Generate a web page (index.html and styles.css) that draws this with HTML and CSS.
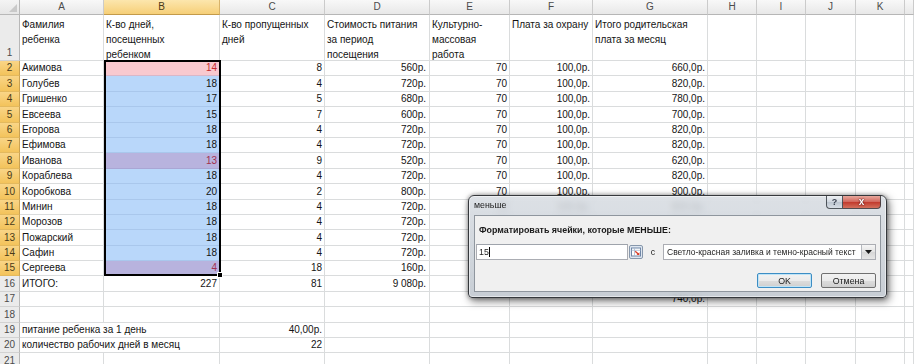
FILE: index.html
```html
<!DOCTYPE html>
<html lang="ru">
<head>
<meta charset="utf-8">
<title>меньше</title>
<link rel="stylesheet" href="styles.css">
</head>
<body>
<div class="app">
  <div class="sheet">
    <div class="corner"><span class="tri"></span></div>
    <div class="ch">A</div><div class="ch on">B</div><div class="ch">C</div><div class="ch">D</div><div class="ch">E</div><div class="ch">F</div><div class="ch">G</div><div class="ch">H</div><div class="ch">I</div><div class="ch">J</div><div class="ch">K</div><div class="ch"></div>

    <div class="c rh top">1</div><div class="c t">Фамилия<br>ребенка</div><div class="c t">К-во дней,<br>посещенных<br>ребенком</div><div class="c t">К-во пропущенных<br>дней</div><div class="c t">Стоимость питания<br>за период<br>посещения</div><div class="c t">Культурно-<br>массовая<br>работа</div><div class="c t">Плата за охрану</div><div class="c t">Итого родительская<br>плата за месяц</div><div class="c"></div><div class="c"></div><div class="c"></div><div class="c"></div><div class="c"></div>

    <div class="c rh on">2</div><div class="c">Акимова</div><div class="c r p">14</div><div class="c r">8</div><div class="c r d">560р.</div><div class="c r">70</div><div class="c r">100,0р.</div><div class="c r">660,0р.</div><div class="c"></div><div class="c"></div><div class="c"></div><div class="c"></div><div class="c"></div>

    <div class="c rh on">3</div><div class="c">Голубев</div><div class="c r b">18</div><div class="c r">4</div><div class="c r d">720р.</div><div class="c r">70</div><div class="c r">100,0р.</div><div class="c r">820,0р.</div><div class="c"></div><div class="c"></div><div class="c"></div><div class="c"></div><div class="c"></div>

    <div class="c rh on">4</div><div class="c">Гришенко</div><div class="c r b">17</div><div class="c r">5</div><div class="c r d">680р.</div><div class="c r">70</div><div class="c r">100,0р.</div><div class="c r">780,0р.</div><div class="c"></div><div class="c"></div><div class="c"></div><div class="c"></div><div class="c"></div>

    <div class="c rh on">5</div><div class="c">Евсеева</div><div class="c r b">15</div><div class="c r">7</div><div class="c r d">600р.</div><div class="c r">70</div><div class="c r">100,0р.</div><div class="c r">700,0р.</div><div class="c"></div><div class="c"></div><div class="c"></div><div class="c"></div><div class="c"></div>

    <div class="c rh on">6</div><div class="c">Егорова</div><div class="c r b">18</div><div class="c r">4</div><div class="c r d">720р.</div><div class="c r">70</div><div class="c r">100,0р.</div><div class="c r">820,0р.</div><div class="c"></div><div class="c"></div><div class="c"></div><div class="c"></div><div class="c"></div>

    <div class="c rh on">7</div><div class="c">Ефимова</div><div class="c r b">18</div><div class="c r">4</div><div class="c r d">720р.</div><div class="c r">70</div><div class="c r">100,0р.</div><div class="c r">820,0р.</div><div class="c"></div><div class="c"></div><div class="c"></div><div class="c"></div><div class="c"></div>

    <div class="c rh on">8</div><div class="c">Иванова</div><div class="c r v">13</div><div class="c r">9</div><div class="c r d">520р.</div><div class="c r">70</div><div class="c r">100,0р.</div><div class="c r">620,0р.</div><div class="c"></div><div class="c"></div><div class="c"></div><div class="c"></div><div class="c"></div>

    <div class="c rh on">9</div><div class="c">Кораблева</div><div class="c r b">18</div><div class="c r">4</div><div class="c r d">720р.</div><div class="c r">70</div><div class="c r">100,0р.</div><div class="c r">820,0р.</div><div class="c"></div><div class="c"></div><div class="c"></div><div class="c"></div><div class="c"></div>

    <div class="c rh on">10</div><div class="c">Коробкова</div><div class="c r b">20</div><div class="c r">2</div><div class="c r d">800р.</div><div class="c r">70</div><div class="c r">100,0р.</div><div class="c r">900,0р.</div><div class="c"></div><div class="c"></div><div class="c"></div><div class="c"></div><div class="c"></div>

    <div class="c rh on">11</div><div class="c">Минин</div><div class="c r b">18</div><div class="c r">4</div><div class="c r d">720р.</div><div class="c r">70</div><div class="c r">100,0р.</div><div class="c r">820,0р.</div><div class="c"></div><div class="c"></div><div class="c"></div><div class="c"></div><div class="c"></div>

    <div class="c rh on">12</div><div class="c">Морозов</div><div class="c r b">18</div><div class="c r">4</div><div class="c r d">720р.</div><div class="c r">70</div><div class="c r">100,0р.</div><div class="c r">820,0р.</div><div class="c"></div><div class="c"></div><div class="c"></div><div class="c"></div><div class="c"></div>

    <div class="c rh on">13</div><div class="c">Пожарский</div><div class="c r b">18</div><div class="c r">4</div><div class="c r d">720р.</div><div class="c r">70</div><div class="c r">100,0р.</div><div class="c r">820,0р.</div><div class="c"></div><div class="c"></div><div class="c"></div><div class="c"></div><div class="c"></div>

    <div class="c rh on">14</div><div class="c">Сафин</div><div class="c r b">18</div><div class="c r">4</div><div class="c r d">720р.</div><div class="c r">70</div><div class="c r">100,0р.</div><div class="c r">820,0р.</div><div class="c"></div><div class="c"></div><div class="c"></div><div class="c"></div><div class="c"></div>

    <div class="c rh on">15</div><div class="c">Сергеева</div><div class="c r v">4</div><div class="c r">18</div><div class="c r d">160р.</div><div class="c r">70</div><div class="c r">100,0р.</div><div class="c r">260,0р.</div><div class="c"></div><div class="c"></div><div class="c"></div><div class="c"></div><div class="c"></div>

    <div class="c rh">16</div><div class="c">ИТОГО:</div><div class="c r">227</div><div class="c r">81</div><div class="c r d">9 080р.</div><div class="c r">980</div><div class="c r">1 400,0р.</div><div class="c r">10 480,0р.</div><div class="c"></div><div class="c"></div><div class="c"></div><div class="c"></div><div class="c"></div>

    <div class="c rh">17</div><div class="c"></div><div class="c"></div><div class="c"></div><div class="c"></div><div class="c"></div><div class="c"></div><div class="c r">740,0р.</div><div class="c"></div><div class="c"></div><div class="c"></div><div class="c"></div><div class="c"></div>

    <div class="c rh">18</div><div class="c"></div><div class="c"></div><div class="c"></div><div class="c"></div><div class="c"></div><div class="c"></div><div class="c"></div><div class="c"></div><div class="c"></div><div class="c"></div><div class="c"></div><div class="c"></div>

    <div class="c rh">19</div><div class="c span2">питание ребенка за 1 день</div><div class="c r">40,00р.</div><div class="c"></div><div class="c"></div><div class="c"></div><div class="c"></div><div class="c"></div><div class="c"></div><div class="c"></div><div class="c"></div><div class="c"></div>

    <div class="c rh">20</div><div class="c span2">количество рабочих дней в месяц</div><div class="c r">22</div><div class="c"></div><div class="c"></div><div class="c"></div><div class="c"></div><div class="c"></div><div class="c"></div><div class="c"></div><div class="c"></div><div class="c"></div>

    <div class="c rh">21</div><div class="c"></div><div class="c"></div><div class="c"></div><div class="c"></div><div class="c"></div><div class="c"></div><div class="c"></div><div class="c"></div><div class="c"></div><div class="c"></div><div class="c"></div><div class="c"></div>

    <div class="selection"><span class="handle"></span></div>
  </div>

  <div class="dlg">
    <div class="titlebar">
      <span class="ttl">меньше</span>
      <div class="capbtns"><span class="help">?</span><span class="close">x</span></div>
    </div>
    <div class="client">
      <div class="lbl">Форматировать ячейки, которые МЕНЬШЕ:</div>
      <div class="inrow">
        <div class="inp">15<span class="caret"></span></div>
        <span class="rng">
          <svg width="14" height="14" viewBox="0 0 14 14">
            <rect x="0.5" y="0.5" width="13" height="13" rx="1.5" fill="#dfe7f1" stroke="#8797ab"/>
            <rect x="2.5" y="3" width="9" height="8" fill="#fff" stroke="#6f86a6"/>
            <path d="M2.5 5.3h9M5.5 3v8" stroke="#a8bad1" stroke-width="0.8"/>
            <path d="M6.2 6.2l3.6 3.3" stroke="#d8402c" stroke-width="1.4" fill="none"/>
            <path d="M10.4 10.1V7.2L7.5 10.1z" fill="#d8402c"/>
          </svg>
        </span>
        <span class="with">с</span>
        <div class="combo">
          <span class="ctext">Светло-красная заливка и темно-красный текст</span>
          <span class="arrow"><svg width="7" height="4" viewBox="0 0 7 4"><path d="M0 0h7L3.5 4z" fill="#1b1b1b"/></svg></span>
        </div>
      </div>
      <div class="btnrow"><span class="btn ok">OK</span><span class="btn">Отмена</span></div>
    </div>
  </div>
</div>
</body>
</html>
```

FILE: styles.css
```css
* { box-sizing: border-box; margin: 0; padding: 0; }
html, body { width: 914px; height: 364px; overflow: hidden; background: #fff; }
body { font-family: "Liberation Sans", Arial, sans-serif; font-size: 10px; color: #141414; }

.app { position: relative; width: 914px; height: 364px; overflow: hidden; }

.sheet {
  position: relative;
  display: grid;
  grid-template-columns: 20px 84px 116px 105px 105px 80px 83px 115px 49px 49px 50px 49px 1fr;
  grid-template-rows: 15px 46px repeat(20, 15.4px);
}

.corner {
  position: relative;
  background: linear-gradient(#f4f4f4, #e6e6e6);
  border-right: 1px solid #b8b8b8;
  border-bottom: 1px solid #b8b8b8;
}
.corner .tri {
  position: absolute; right: 2px; bottom: 2px;
  width: 0; height: 0;
  border-left: 8px solid transparent;
  border-bottom: 8px solid #c9c9c9;
}

.ch {
  background: linear-gradient(#f8f8f8, #e8e8e8);
  border-right: 1px solid #cbcbcb;
  border-bottom: 1px solid #b6b6b6;
  color: #4b4b4b;
  text-align: center;
  line-height: 14px;
  font-size: 10px;
}
.ch.on {
  background: linear-gradient(#fce6ad, #f6cf78);
  border-right-color: #d8b36a;
  border-bottom-color: #c39a4a;
  color: #4a3a18;
}

.c {
  border-right: 1px solid #dadcdd;
  border-bottom: 1px solid #dadcdd;
  padding: 0 2px;
  white-space: nowrap;
  overflow: hidden;
  display: flex;
  align-items: flex-end;
  line-height: 14px;
}
.c.t { display: block; line-height: 15px; padding-top: 2px; }
.c.r { justify-content: flex-end; }
.c.d { padding-right: 3px; }
.c.span2 { grid-column: span 2; }

.rh {
  background: #ebebeb;
  border-right: 1px solid #b8b8b8;
  border-bottom-color: #d2d2d2;
  color: #4b4b4b;
  justify-content: center;
  padding: 0;
}
.rh.on {
  background: linear-gradient(#f9d587, #f3c35b);
  border-right-color: #c9a253;
  border-bottom-color: #e3b95e;
  color: #4a3a18;
}

.b { background: #b9d7fa; border-bottom-color: #a9c7ec; }
.p { background: #f9c9cf; color: #c62b30; border-bottom-color: #d9b7c8; }
.v { background: #b8b3de; color: #a2304f; border-bottom-color: #a9a6d4; }

.selection {
  position: absolute;
  grid-column: 3 / 4;
  grid-row: 3 / 17;
  top: -1px; left: 0; right: -1px; bottom: 0;
  border: 2px solid #000;
  pointer-events: none;
}
.selection .handle {
  position: absolute; right: -4px; bottom: -4px;
  width: 6px; height: 6px;
  background: #000;
  border: 1px solid #fff;
}

/* dialog */
.dlg {
  position: absolute;
  left: 468px; top: 195px;
  width: 419px; height: 103px;
  border: 1px solid #35383c;
  border-radius: 6px 6px 4px 4px;
  background: linear-gradient(180deg, rgba(214, 219, 225, 0.84), rgba(192, 199, 207, 0.88));
  -webkit-backdrop-filter: blur(3px);
  backdrop-filter: blur(3px);
  box-shadow: inset 0 0 0 1px rgba(255, 255, 255, 0.5), 0 0 4px rgba(0, 0, 0, 0.35), 2px 3px 9px rgba(0, 0, 0, 0.55);
  display: flex;
  flex-direction: column;
  padding: 0 5px 5px;
  font-size: 8.5px;
  color: #1e1e1e;
}
.titlebar {
  height: 19px;
  display: flex;
  justify-content: space-between;
  align-items: flex-start;
}
.ttl { padding-top: 3px; line-height: 12px; font-size: 8.8px; color: #202020; }
.capbtns { display: flex; }
.capbtns span {
  height: 13px;
  display: flex; align-items: center; justify-content: center;
  border: 1px solid rgba(55, 60, 66, 0.85);
  border-top: none;
}
.help {
  width: 17px;
  border-radius: 0 0 0 4px;
  background: linear-gradient(#eef1f4, #cfd6de 50%, #bcc5cf 51%, #d8dee5);
  color: #3a4250;
  font-weight: bold;
  font-size: 9px;
}
.capbtns .close {
  width: 38px;
  border-left: none;
  border-radius: 0 0 4px 0;
  background: linear-gradient(#e8a89d, #d0645a 50%, #c1392c 51%, #d3705d);
  color: #fff;
  font-weight: bold;
  font-size: 10px;
  line-height: 10px;
  text-shadow: 0 0 2px #5a1010, 0 0 1px #5a1010;
}

.client {
  flex: 1;
  background: #f0f0f0;
  border: 1px solid #8f969e;
  padding: 8px 4px 0 1px;
  display: flex;
  flex-direction: column;
}
.lbl { padding-left: 3px; font-weight: bold; font-size: 8.9px; line-height: 12px; color: #1a1a1a; }
.inrow { margin-top: 8px; height: 16px; display: flex; align-items: flex-start; }
.inp {
  width: 152px; height: 16px;
  background: #fff;
  border: 1px solid #abadb3;
  border-top-color: #9ea3ab;
  padding-left: 2px;
  display: flex; align-items: center;
  font-size: 8.8px;
}
.caret { display: inline-block; width: 1px; height: 10px; background: #000; }
.rng { width: 14px; height: 14px; margin: 1px 0 0 1px; display: flex; }
.with { width: 20px; text-align: center; line-height: 16px; font-size: 8.8px; }
.combo {
  width: 213px; height: 16px;
  background: #fff;
  border: 1px solid #abadb3;
  display: flex; align-items: stretch;
}
.ctext { flex: 1; padding-left: 3px; line-height: 14px; font-size: 8.5px; white-space: nowrap; overflow: hidden; }
.arrow {
  width: 14px;
  border-left: 1px solid #b5b8be;
  background: linear-gradient(#f6f6f6, #e2e2e2 50%, #d6d6d6 51%, #e6e6e6);
  display: flex; align-items: center; justify-content: center;
}
.btnrow { margin-top: 13px; display: flex; justify-content: flex-end; gap: 9px; }
.btn {
  width: 55px; height: 15px;
  border: 1px solid #707070;
  border-radius: 2px;
  background: linear-gradient(#f2f2f2, #ebebeb 50%, #dddddd 51%, #cfcfcf);
  display: flex; align-items: center; justify-content: center;
  font-size: 8.8px;
  color: #1a1a1a;
}
.btn.ok {
  border-color: #3c8dc4;
  box-shadow: inset 0 0 0 1px #bfe4f7;
}
```
